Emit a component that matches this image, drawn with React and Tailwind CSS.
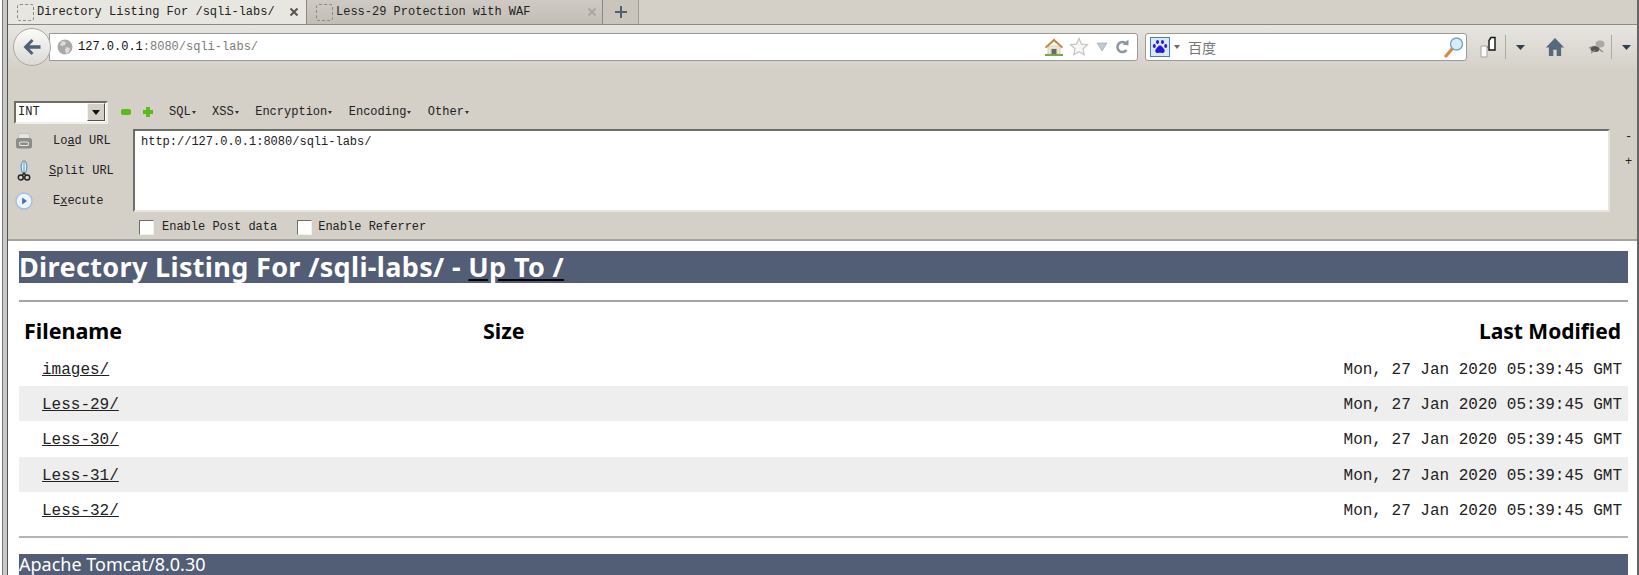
const MONO = "font-['Liberation_Mono',monospace]";

const rows = [
  { name: "images/", shaded: false },
  { name: "Less-29/", shaded: true },
  { name: "Less-30/", shaded: false },
  { name: "Less-31/", shaded: true },
  { name: "Less-32/", shaded: false },
];

const DashedFavicon = () => (
  <span className="block h-[17px] w-[17px] shrink-0 rounded-[3px] border border-dashed border-[#8a8a86]" />
);

const CloseX = ({ color }) => (
  <svg width="10" height="10" viewBox="0 0 10 10" className="shrink-0">
    <path d="M1.5 1.5l7 7M8.5 1.5l-7 7" stroke={color} strokeWidth="2" />
  </svg>
);

const BackArrow = () => (
  <svg width="20" height="18" viewBox="0 0 20 18">
    <path d="M9.5 1L1.5 9l8 8 2-2-4-4.2h11V7.2h-11l4-4.200z" fill="#4f6274" />
  </svg>
);

const Globe = () => (
  <svg width="16" height="16" viewBox="0 0 16 16" className="shrink-0">
    <circle cx="8" cy="8" r="7.500" fill="#a9a9a9" />
    <path d="M5 2l4 1-1 3-3 1-2-1zM9 8l4 1-1 4-3 2-1-4z" fill="#dcdcdc" />
  </svg>
);

const HomeColor = () => (
  <svg width="20" height="20" viewBox="0 0 20 20" className="shrink-0">
    <rect x="1" y="17" width="18" height="2" fill="#6fae3c" />
    <path d="M4 9h12v8h-3v-5H7v5H4z" fill="#efe9dc" stroke="#b9a98a" strokeWidth=".5" />
    <path d="M7.500 12h5v5h-5z" fill="#6a6a64" />
    <path d="M10 1.500L0.800 10l1.400 1.200L10 4.500l7.800 6.700 1.400-1.200z" fill="#c28a47" />
  </svg>
);

const Star = () => (
  <svg width="20" height="20" viewBox="0 0 20 20" className="shrink-0">
    <path d="M10 1.500l2.500 5.600 6 .6-4.500 4.100 1.300 6L10 14.700l-5.300 3.100 1.300-6-4.500-4.100 6-.6z" fill="#f7f7f5" stroke="#c4c4c0" strokeWidth="1.200" />
  </svg>
);

const DropTriangle = () => (
  <svg width="12" height="10" viewBox="0 0 12 10" className="shrink-0">
    <path d="M1 1h10L6 9z" fill="#c3cbd0" stroke="#aab3b9" strokeWidth=".8" />
  </svg>
);

const Reload = () => (
  <svg width="14" height="16" viewBox="0 0 14 16" className="shrink-0">
    <path d="M11 4.500A5 5 0 1 0 11.500 11" fill="none" stroke="#8a98a3" strokeWidth="2.600" />
    <path d="M7.500 5.500L13.500 6.500V0.500z" fill="#8a98a3" />
  </svg>
);

const BaiduPaw = () => (
  <span className="flex h-[20px] w-[20px] shrink-0 items-center justify-center border border-[#3f7fd0] bg-[#dbe9f8]">
    <svg width="16" height="16" viewBox="0 0 16 16">
      <ellipse cx="5.500" cy="3" rx="1.500" ry="2" fill="#2319dc" />
      <ellipse cx="10.500" cy="3" rx="1.500" ry="2" fill="#2319dc" />
      <ellipse cx="2.300" cy="7" rx="1.500" ry="2" fill="#2319dc" />
      <ellipse cx="13.700" cy="7" rx="1.500" ry="2" fill="#2319dc" />
      <path d="M8 6.500c2 0 2.500 2 4 3.500s.5 4.500-2 4c-1-.2-3-.2-4 0-2.500.5-3.500-2.500-2-4s2-3.500 4-3.500z" fill="#2319dc" />
    </svg>
  </span>
);

const SmallCaret = ({ color = "#6a6a6a", width = 6, height = 4 }) => (
  <svg width={width} height={height} viewBox="0 0 6 4" preserveAspectRatio="none" className="shrink-0">
    <path d="M0 0h6L3 4z" fill={color} />
  </svg>
);

const Magnifier = () => (
  <svg width="20" height="22" viewBox="0 0 20 22" className="shrink-0">
    <path d="M2 20l6-7" stroke="#d98a3a" strokeWidth="3.200" strokeLinecap="round" />
    <circle cx="12.500" cy="8" r="6" fill="#d8ecfa" stroke="#7aa6c8" strokeWidth="1.500" />
  </svg>
);

const BookmarkPages = () => (
  <svg width="16" height="22" viewBox="0 0 16 22" className="shrink-0">
    <path d="M1 10h6v11H1z" fill="#fafafa" stroke="#a4a4a4" />
    <path d="M9 4.500L11 1.500h4v12.500H9z" fill="#fff" stroke="#111" strokeWidth="1.400" />
    <path d="M7 11h2" stroke="#555" />
  </svg>
);

const HomeDark = () => (
  <svg width="20" height="20" viewBox="0 0 18 18" className="shrink-0">
    <path d="M9 1L.8 9.500h2.700V17h4v-5.500h3V17h4V9.500h2.700z" fill="#566a7c" />
  </svg>
);

const BugBlur = () => (
  <svg width="18" height="16" viewBox="0 0 18 16" className="shrink-0">
    <ellipse cx="7" cy="10" rx="4.500" ry="3" fill="#555" />
    <ellipse cx="12" cy="5" rx="4.500" ry="3.500" fill="#a8a8a4" />
    <path d="M1 9l5-2M3 14l4-3M11 10l4 3" stroke="#8a8a88" strokeWidth="1.200" />
  </svg>
);

const ToolDivider = () => <span className="block h-[24px] w-px shrink-0 bg-[#aeaba4]" />;

const MenuItem = ({ label }) => (
  <span className="flex items-center gap-px">
    {label}
    <SmallCaret color="#333" width={4} height={3} />
  </span>
);

const PrinterIcon = () => (
  <svg width="18" height="18" viewBox="0 0 18 18">
    <path d="M4 1.500h10l1 5H3z" fill="#e4e4e2" stroke="#b5b5b2" strokeWidth=".6" />
    <rect x="1" y="6" width="16" height="10.500" rx="2.500" fill="#8b8b88" />
    <rect x="4.500" y="10" width="9" height="3.500" rx="1.500" fill="none" stroke="#e8e8e6" strokeWidth="1.100" />
  </svg>
);

const ScissorsIcon = () => (
  <svg width="14" height="22" viewBox="0 0 14 22">
    <ellipse cx="7" cy="7" rx="2.800" ry="6" fill="#dcebf5" stroke="#6f9fc4" strokeWidth="1.300" />
    <path d="M7 2v11" stroke="#6f9fc4" strokeWidth="1" />
    <circle cx="3.800" cy="17.500" r="2.500" fill="none" stroke="#222" strokeWidth="1.400" />
    <circle cx="10.200" cy="17.500" r="2.500" fill="none" stroke="#222" strokeWidth="1.400" />
    <path d="M5 15.500l2-2.500 2 2.500" fill="none" stroke="#222" strokeWidth="1.300" />
  </svg>
);

const ExecuteIcon = () => (
  <svg width="18" height="18" viewBox="0 0 18 18">
    <circle cx="9" cy="9" r="8" fill="#eef4fb" stroke="#9dbfe2" strokeWidth="1.400" />
    <path d="M7.200 5.500L12 9l-4.800 3.500z" fill="#3c72b8" />
  </svg>
);

const SideAction = ({ icon, children }) => (
  <div className="flex h-[30px] items-center">
    <span className="flex w-[20px] justify-center">{icon}</span>
    {children}
  </div>
);

const Checkbox = ({ label, className = "", labelClass = "ml-[8px]" }) => (
  <label className={`flex items-center ${className}`}>
    <input
      type="checkbox"
      readOnly
      className="h-[15px] w-[15px] appearance-none border border-t-[#6f6d68] border-l-[#6f6d68] border-r-[#f0efeb] border-b-[#f0efeb] bg-white"
    />
    <span className={labelClass}>{label}</span>
  </label>
);

const App = () => {
  return (
    <div className={`h-[575px] w-[1639px] overflow-hidden bg-white text-[#222] ${MONO}`}>
      <div className="flex h-full">
        {/* window frame, left */}
        <div className="h-full w-[8px] shrink-0 border-r border-[#55534f] bg-white">
          <div className="ml-[2px] h-full border-l border-[#777] bg-[#c9c9c7]" />
        </div>

        <div className="flex h-full min-w-0 flex-1 flex-col">
          {/* tab strip */}
          <div className="flex h-[25px] shrink-0 border-b border-[#8c8a84] bg-[#d4d0c8] text-[12px] text-[#222]">
            <div className="flex h-full w-[298px] shrink-0 items-center bg-[#e8e6e1] pl-[9px] pr-[7px]">
              <DashedFavicon />
              <span className="ml-[3px] flex-1 whitespace-pre">Directory Listing For /sqli-labs/</span>
              <CloseX color="#555" />
            </div>
            <div className="flex h-full w-[297px] shrink-0 items-center border-x border-[#8a8882] bg-gradient-to-b from-[#cfcbc4] to-[#c2beb6] pl-[9px] pr-[5px]">
              <DashedFavicon />
              <span className="ml-[3px] flex-1 whitespace-pre">Less-29 Protection with WAF</span>
              <CloseX color="#a9a7a2" />
            </div>
            <div className="flex h-full w-[36px] items-center justify-center border-r border-[#a09d97] bg-[#c9c5bd]">
              <svg width="12" height="12" viewBox="0 0 12 12">
                <path d="M6 0v12M0 6h12" stroke="#4f6274" strokeWidth="2" />
              </svg>
            </div>
          </div>

          {/* navigation bar */}
          <div className="flex h-[47px] shrink-0 items-start bg-gradient-to-b from-[#e7e5e0] to-[#d4d0c8] pt-[8px]">
            <div className="relative z-10 -mt-[5px] ml-[5px] flex h-[38px] w-[38px] shrink-0 items-center justify-center rounded-full border border-[#a9a9a6] bg-gradient-to-b from-[#fbfbfa] to-[#dcdad5]">
              <BackArrow />
            </div>
            <div className="-ml-[2px] flex h-[28px] w-[1089px] shrink-0 items-center rounded-r-[3px] border border-[#9c9a96] bg-white pl-[7px] pr-[8px] text-[12px]">
              <Globe />
              <span className="ml-[5px] text-[#111]">127.0.0.1</span>
              <span className="text-[#7b7b7b]">:8080/sqli-labs/</span>
              <span className="flex-1" />
              <HomeColor />
              <span className="ml-[5px]"><Star /></span>
              <span className="ml-[7px]"><DropTriangle /></span>
              <span className="ml-[7px]"><Reload /></span>
            </div>
            <div className="ml-[7px] flex h-[28px] w-[322px] shrink-0 items-center rounded-[3px] border border-[#9c9a96] bg-white pl-[4px] pr-[2px]">
              <BaiduPaw />
              <span className="ml-[4px]"><SmallCaret /></span>
              <span className="ml-[8px] flex-1 font-['Noto_Sans_CJK_SC',sans-serif] text-[14px] leading-[18px] text-[#777]">百度</span>
              <Magnifier />
            </div>
            <div className="flex h-[28px] items-center">
              <span className="ml-[13px]"><BookmarkPages /></span>
              <span className="ml-[9px]"><ToolDivider /></span>
              <span className="ml-[10px]"><SmallCaret color="#2f4050" width={9} height={5} /></span>
              <span className="ml-[20px]"><HomeDark /></span>
              <span className="ml-[23px]"><BugBlur /></span>
              <span className="ml-[5px]"><ToolDivider /></span>
              <span className="ml-[10px]"><SmallCaret color="#2f4050" width={9} height={5} /></span>
            </div>
          </div>

          {/* hackbar */}
          <div className="flex h-[169px] shrink-0 flex-col border-b-2 border-[#a5a39e] bg-[#d4d0c8] pl-[6px] text-[12px] text-[#222]">
            <div className="mt-[27px] flex h-[26px] shrink-0 items-center">
              <div className="flex h-[23px] w-[94px] items-center border-2 border-t-[#6f6d68] border-l-[#6f6d68] border-r-[#f0efeb] border-b-[#f0efeb] bg-white pl-[2px] pr-px">
                <span className="flex-1">INT</span>
                <span className="flex h-[18px] w-[18px] items-center justify-center border border-t-[#f4f3ef] border-l-[#f4f3ef] border-r-[#55534f] border-b-[#55534f] bg-[#d4d0c8]">
                  <SmallCaret color="#111" width={8} height={5} />
                </span>
              </div>
              <svg width="12" height="8" viewBox="0 0 12 8" className="ml-[12px]">
                <rect x="1" y="1" width="10" height="6" rx="2" fill="#5dbb1d" />
              </svg>
              <svg width="12" height="12" viewBox="0 0 12 12" className="ml-[10px]">
                <path d="M4 1h4v3h3v4H8v3H4V8H1V4h3z" fill="#5dbb1d" />
              </svg>
              <div className="ml-[15px] flex gap-[16.500px]">
                <MenuItem label="SQL" />
                <MenuItem label="XSS" />
                <MenuItem label="Encryption" />
                <MenuItem label="Encoding" />
                <MenuItem label="Other" />
              </div>
            </div>
            <div className="mt-[4px] flex h-[83px] shrink-0">
              <div className="-mt-[3px] w-[119px] shrink-0">
                <SideAction icon={<PrinterIcon />}>
                  <span className="ml-[19px]">Lo<u>a</u>d URL</span>
                </SideAction>
                <SideAction icon={<ScissorsIcon />}>
                  <span className="ml-[15px]"><u>S</u>plit URL</span>
                </SideAction>
                <SideAction icon={<ExecuteIcon />}>
                  <span className="ml-[19px]">E<u>x</u>ecute</span>
                </SideAction>
              </div>
              <div className="w-[1477px] shrink-0 border-2 border-t-[#6f6d68] border-l-[#6f6d68] border-r-[#e6e5df] border-b-[#e6e5df] bg-white px-[6px] pt-[3px] leading-[17px]">
                http://127.0.0.1:8080/sqli-labs/
              </div>
              <div className="-mt-[4px] flex flex-1 flex-col items-center pl-[10px] leading-[25px]">
                <span>-</span>
                <span>+</span>
              </div>
            </div>
            <div className="ml-[125px] flex h-[27px] shrink-0 items-center pt-[3px]">
              <Checkbox label="Enable Post data" />
              <Checkbox label="Enable Referrer" className="ml-[20px]" labelClass="ml-[6px]" />
            </div>
          </div>

          {/* tomcat directory page */}
          <div className="flex-1 overflow-hidden pl-[11px] pr-[9px] pt-[10px]">
            <h1 className="flex h-[32px] items-center bg-[#525d76] font-['Noto_Sans',sans-serif] text-[27px] font-bold tracking-[0.35px] text-white">
              <span className="whitespace-pre">
                Directory Listing For /sqli-labs/ - <a className="underline decoration-black">Up To /</a>
              </span>
            </h1>
            <div className="mt-[17px] h-[2px] bg-[#a5a5a5]" />
            <div className="flex h-[49px] items-center pl-[5px] pr-[7px] pt-[10px] font-['Noto_Sans',sans-serif] text-[21.500px] font-bold text-black">
              <span className="w-[459px]">Filename</span>
              <span>Size</span>
              <span className="ml-auto text-[21px]">Last Modified</span>
            </div>
            {rows.map((row) => (
              <div
                key={row.name}
                className={`flex h-[35.200px] items-center pl-[23px] pr-[6px] pt-[3px] text-[16px] text-[#222] ${row.shaded ? "bg-[#eeeeee]" : ""}`}
              >
                <a className="underline">{row.name}</a>
                <span className="ml-auto">Mon, 27 Jan 2020 05:39:45 GMT</span>
              </div>
            ))}
            <div className="mt-[9px] h-[2px] bg-[#b5b5b5]" />
            <h3 className="mt-[16px] flex h-[21px] items-center bg-[#525d76] font-['Noto_Sans',sans-serif] text-[18px] leading-none text-white">
              Apache Tomcat/8.0.30
            </h3>
          </div>
        </div>

        {/* window frame, right */}
        <div className="h-full w-[2px] shrink-0 bg-[#666]" />
      </div>
    </div>
  );
};

export default App;
